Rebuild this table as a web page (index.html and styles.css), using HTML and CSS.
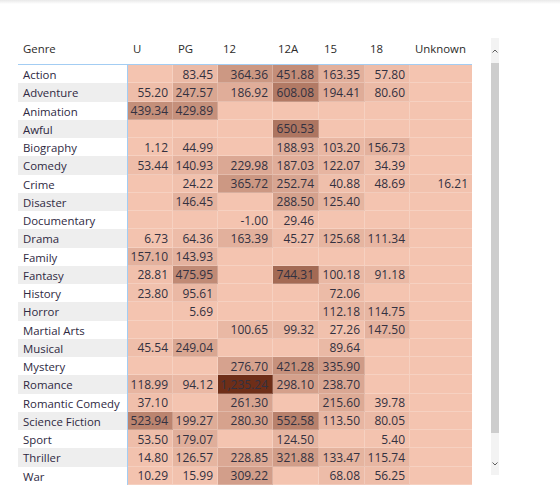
FILE: index.html
```html
<!DOCTYPE html>
<html lang="en">
<head>
<meta charset="utf-8">
<title>Genre by Certificate</title>
<link rel="stylesheet" href="styles.css">
</head>
<body>
<div class="topshade"></div>
<div class="visual">
  <div class="table" id="table">
    <div class="hcell genre-h">Genre</div>
    <div class="hcell">U</div>
    <div class="hcell">PG</div>
    <div class="hcell">12</div>
    <div class="hcell">12A</div>
    <div class="hcell">15</div>
    <div class="hcell">18</div>
    <div class="hcell">Unknown</div>
  </div>
  <div class="scrollbar">
    <div class="sb-btn sb-up">
      <svg width="8" height="6" viewBox="0 0 8 6"><path d="M1.5 4.5 L4 2 L6.5 4.5" fill="none" stroke="#5f5f5f" stroke-width="1"/></svg>
    </div>
    <div class="sb-thumb"></div>
    <div class="sb-track"></div>
    <div class="sb-btn sb-down">
      <svg width="8" height="6" viewBox="0 0 8 6"><path d="M1.5 1.5 L4 4 L6.5 1.5" fill="none" stroke="#5f5f5f" stroke-width="1"/></svg>
    </div>
  </div>
</div>
<script src="script.js"></script>
</body>
</html>
```
FILE: styles.css
```css
html, body {
  margin: 0;
  padding: 0;
  background: #ffffff;
}
body {
  font-family: "Segoe UI", "Open Sans", "Noto Sans", sans-serif;
  font-size: 12px;
  color: #252423;
}
.topshade {
  height: 4px;
  background: linear-gradient(#e9e9e9, #ffffff);
}
.visual {
  display: flex;
  align-items: flex-start;
  padding: 31px 0 0 18px;
}
.table {
  display: grid;
  grid-template-columns: 110px 45px 45px 55px 46px 46px 45px 62px;
  grid-template-rows: 30px;
  grid-auto-rows: 18.25px;
  width: 454px;
}
.hcell {
  display: flex;
  align-items: center;
  padding: 0 0 2px 5px;
  border-bottom: 1px solid #a3cdf3;
  color: #2c2b2a;
  font-size: 11.4px;
  white-space: nowrap;
}
.genre {
  display: flex;
  align-items: center;
  padding: 1px 0 0 5px;
  border-right: 1px solid #a3cdf3;
  color: #2e2942;
  font-size: 11.4px;
  white-space: nowrap;
  background: #ffffff;
}
.genre.band {
  background: #eeeeee;
}
.val {
  display: flex;
  align-items: center;
  justify-content: flex-end;
  padding: 1px 4px 0 0;
  background: #f4c4b0;
  border-right: 1px solid rgba(255, 255, 255, 0.22);
  border-bottom: 1px solid rgba(255, 255, 255, 0.22);
  color: #333140;
  white-space: nowrap;
}
.val.last {
  border-right: none;
}
.scrollbar {
  margin: 3px 0 0 19px;
  width: 8px;
  height: 437px;
  display: flex;
  flex-direction: column;
  background: #f3f3f3;
}
.sb-btn {
  display: flex;
  align-items: center;
  justify-content: center;
}
.sb-up {
  height: 25px;
}
.sb-thumb {
  height: 370px;
  background: #cdcdcd;
}
.sb-track {
  flex: 1;
}
.sb-down {
  height: 22px;
}
```
FILE: script.js
```js
const data = [
  ['Action', [null, 83.45, 364.36, 451.88, 163.35, 57.80, null]],
  ['Adventure', [55.20, 247.57, 186.92, 608.08, 194.41, 80.60, null]],
  ['Animation', [439.34, 429.89, null, null, null, null, null]],
  ['Awful', [null, null, null, 650.53, null, null, null]],
  ['Biography', [1.12, 44.99, null, 188.93, 103.20, 156.73, null]],
  ['Comedy', [53.44, 140.93, 229.98, 187.03, 122.07, 34.39, null]],
  ['Crime', [null, 24.22, 365.72, 252.74, 40.88, 48.69, 16.21]],
  ['Disaster', [null, 146.45, null, 288.50, 125.40, null, null]],
  ['Documentary', [null, null, -1.00, 29.46, null, null, null]],
  ['Drama', [6.73, 64.36, 163.39, 45.27, 125.68, 111.34, null]],
  ['Family', [157.10, 143.93, null, null, null, null, null]],
  ['Fantasy', [28.81, 475.95, null, 744.31, 100.18, 91.18, null]],
  ['History', [23.80, 95.61, null, null, 72.06, null, null]],
  ['Horror', [null, 5.69, null, null, 112.18, 114.75, null]],
  ['Martial Arts', [null, null, 100.65, 99.32, 27.26, 147.50, null]],
  ['Musical', [45.54, 249.04, null, null, 89.64, null, null]],
  ['Mystery', [null, null, 276.70, 421.28, 335.90, null, null]],
  ['Romance', [118.99, 94.12, 1235.24, 298.10, 238.70, null, null]],
  ['Romantic Comedy', [37.10, null, 261.30, null, 215.60, 39.78, null]],
  ['Science Fiction', [523.94, 199.27, 280.30, 552.58, 113.50, 80.05, null]],
  ['Sport', [53.50, 179.07, null, 124.50, null, 5.40, null]],
  ['Thriller', [14.80, 126.57, 228.85, 321.88, 133.47, 115.74, null]],
  ['War', [10.29, 15.99, 309.22, null, 68.08, 56.25, null]]
];

const MIN = -1.0, MAX = 1235.24;
const LO = [244, 196, 176], HI = [110, 46, 24];

function colorFor(v) {
  const t = (v - MIN) / (MAX - MIN);
  const c = LO.map((lo, i) => Math.round(lo + (HI[i] - lo) * t));
  return 'rgb(' + c.join(',') + ')';
}

function fmt(v) {
  return v.toLocaleString('en-US', { minimumFractionDigits: 2, maximumFractionDigits: 2 });
}

const table = document.getElementById('table');
data.forEach(([genre, vals], r) => {
  const g = document.createElement('div');
  g.className = 'genre' + (r % 2 === 1 ? ' band' : '');
  g.textContent = genre;
  table.appendChild(g);
  vals.forEach((v, c) => {
    const cell = document.createElement('div');
    cell.className = 'val' + (c === vals.length - 1 ? ' last' : '');
    if (v !== null) {
      cell.textContent = fmt(v);
      cell.style.background = colorFor(v);
    }
    table.appendChild(cell);
  });
});
```
